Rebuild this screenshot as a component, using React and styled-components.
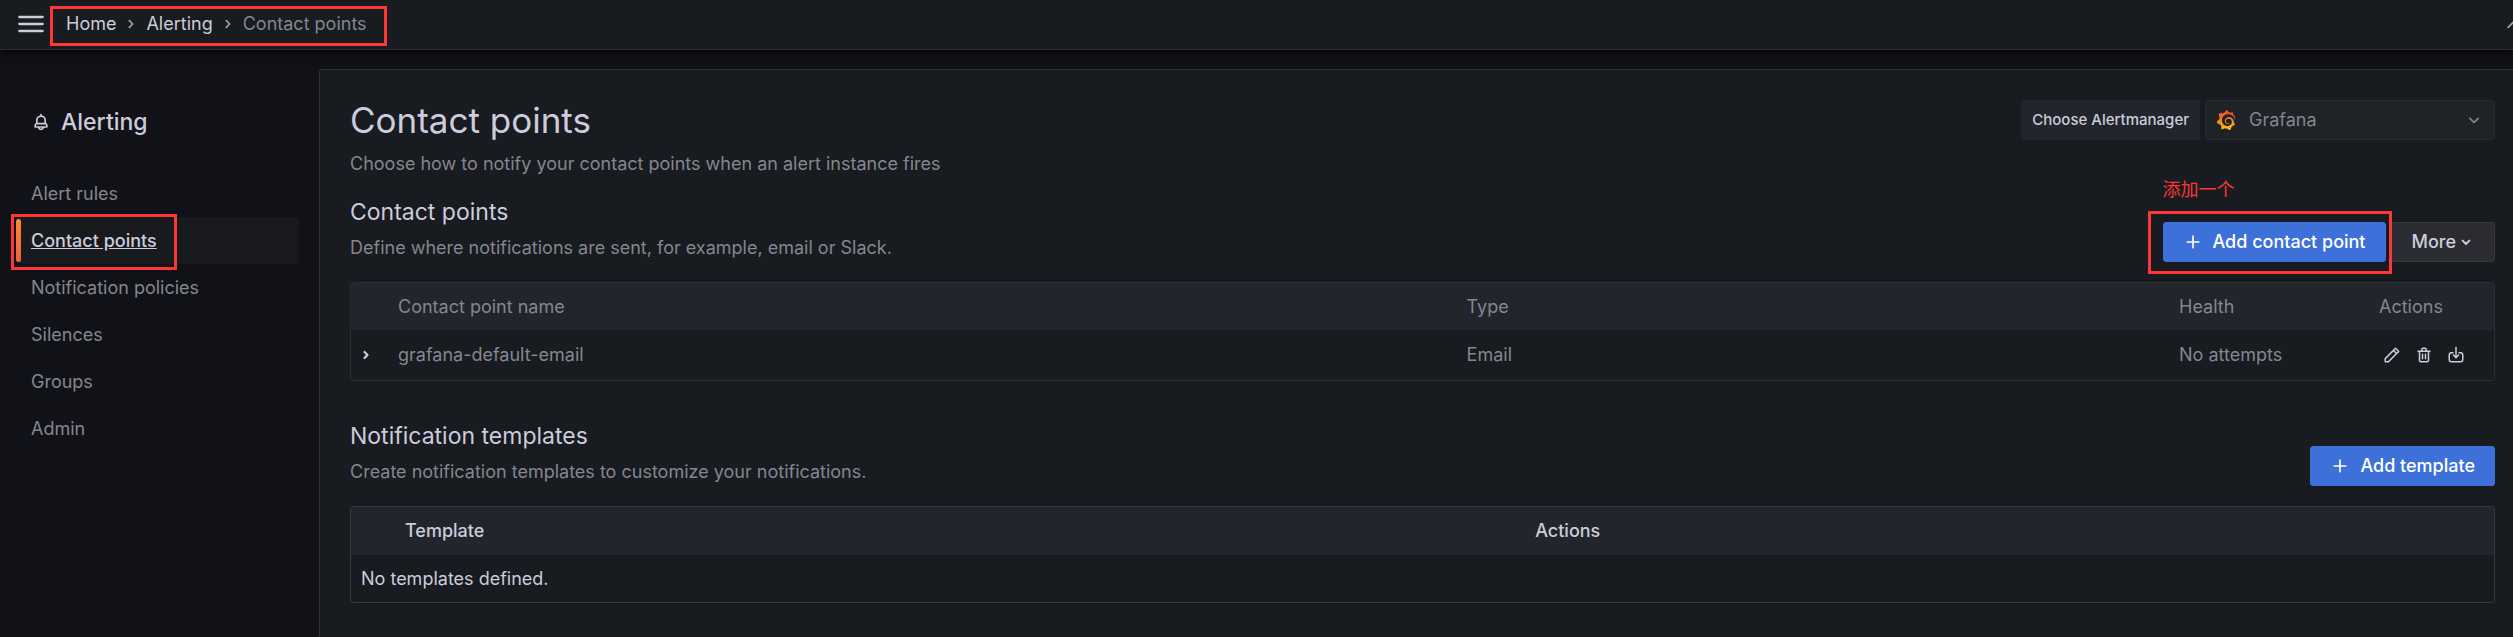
import styled, { createGlobalStyle, css } from "styled-components";
import { SiGrafana } from "react-icons/si";

const navItems = [
    { label: "Alert rules" },
    { label: "Contact points", active: true },
    { label: "Notification policies" },
    { label: "Silences" },
    { label: "Groups" },
    { label: "Admin" },
];

const contactPoints = [
    { name: "grafana-default-email", type: "Email", health: "No attempts" },
];

const icons = {
    pen: "M22,7.24a1,1,0,0,0-.29-.71L17.47,2.29A1,1,0,0,0,16.76,2a1,1,0,0,0-.71.29L13.22,5.12h0L2.29,16.05a1,1,0,0,0-.29.71V21a1,1,0,0,0,1,1H7.24A1,1,0,0,0,8,21.71L18.87,10.78h0L21.71,8a1.19,1.19,0,0,0,.22-.33,1,1,0,0,0,0-.24.7.7,0,0,0,0-.14ZM6.83,20H4V17.17l9.93-9.93,2.83,2.83ZM18.17,8.66,15.34,5.83l1.42-1.41,2.82,2.82Z",
    trash: "M10,18a1,1,0,0,0,1-1V11a1,1,0,0,0-2,0v6A1,1,0,0,0,10,18ZM20,6H16V5a3,3,0,0,0-3-3H11A3,3,0,0,0,8,5V6H4A1,1,0,0,0,4,8H5V19a3,3,0,0,0,3,3h8a3,3,0,0,0,3-3V8h1a1,1,0,0,0,0-2ZM10,5a1,1,0,0,1,1-1h2a1,1,0,0,1,1,1V6H10Zm7,14a1,1,0,0,1-1,1H8a1,1,0,0,1-1-1V8H17Zm-3-1a1,1,0,0,0,1-1V11a1,1,0,0,0-2,0v6A1,1,0,0,0,14,18Z",
    bell: "M18,13.18V10a6,6,0,0,0-5-5.91V3a1,1,0,0,0-2,0V4.09A6,6,0,0,0,6,10v3.18A3,3,0,0,0,4,16v2a1,1,0,0,0,1,1H8.14a4,4,0,0,0,7.72,0H19a1,1,0,0,0,1-1V16A3,3,0,0,0,18,13.18ZM8,10a4,4,0,0,1,8,0v3H8Zm4,10a2,2,0,0,1-1.72-1h3.44A2,2,0,0,1,12,20Zm6-3H6V16a1,1,0,0,1,1-1H17a1,1,0,0,1,1,1Z",
};

const strokes = {
    right: "M10 8l4 4-4 4",
    down: "M7 10l5 5 5-5",
    up: "M5 16l7-7 7 7",
    plus: "M12 5v14M5 12h14",
    download: "M12 2v13M8.5 12l3.5 3.5 3.5-3.5M8 9H6a3 3 0 0 0-3 3v6a3 3 0 0 0 3 3h12a3 3 0 0 0 3-3v-6a3 3 0 0 0-3-3h-2",
    menu: "M2 6h20M2 12h20M2 18h20",
};

function Icon({ name, size = 20, weight = 2 }) {
    return (
        <svg width={size} height={size} viewBox="0 0 24 24" aria-hidden="true">
            {icons[name] ? (
                <path d={icons[name]} fill="currentColor" />
            ) : (
                <path
                    d={strokes[name]}
                    fill="none"
                    stroke="currentColor"
                    strokeWidth={weight}
                    strokeLinecap="round"
                    strokeLinejoin="round"
                />
            )}
        </svg>
    );
}

function GrafanaLogo() {
    return (
        <>
            <svg width="0" height="0" aria-hidden="true">
                <linearGradient id="grafana" x1="0" y1="1" x2="0" y2="0">
                    <stop offset="0" stopColor="#fcc70b" />
                    <stop offset="0.8" stopColor="#f05a28" />
                </linearGradient>
            </svg>
            <SiGrafana size={20} fill="url(#grafana)" />
        </>
    );
}

export default function App() {
    return (
        <>
            <GlobalStyle />
            <TopBar>
                <MenuButton aria-label="Toggle menu"><Icon name="menu" size={28} /></MenuButton>
                <Breadcrumbs aria-label="Breadcrumbs">
                    <Crumb href="#home">Home</Crumb>
                    <Icon name="right" />
                    <Crumb href="#alerting">Alerting</Crumb>
                    <Icon name="right" />
                    <Current>Contact points</Current>
                    <Marker $inset="-5px -20px -10px -16px" />
                </Breadcrumbs>
                <CollapseButton aria-label="Collapse top bar"><Icon name="up" /></CollapseButton>
            </TopBar>
            <Layout>
                <Sidebar>
                    <SidebarTitle><Icon name="bell" /> Alerting</SidebarTitle>
                    <NavList>
                        {navItems.map((item) => (
                            <NavItem key={item.label}>
                                <NavLink href="#" $active={item.active}>{item.label}</NavLink>
                                {item.active && <Marker $inset="-3px 122px -6px -5px" />}
                            </NavItem>
                        ))}
                    </NavList>
                </Sidebar>
                <Main>
                    <Row>
                        <div>
                            <PageTitle>Contact points</PageTitle>
                            <Muted>Choose how to notify your contact points when an alert instance fires</Muted>
                        </div>
                        <Picker>
                            <PickerLabel htmlFor="alertmanager">Choose Alertmanager</PickerLabel>
                            <SelectBox>
                                <GrafanaLogo />
                                <Select id="alertmanager" disabled>
                                    <option>Grafana</option>
                                </Select>
                                <Icon name="down" />
                            </SelectBox>
                        </Picker>
                    </Row>

                    <Section>
                        <Row>
                            <div>
                                <SectionTitle>Contact points</SectionTitle>
                                <Muted>Define where notifications are sent, for example, email or Slack.</Muted>
                            </div>
                            <Actions>
                                <Marked>
                                    <Note>添加一个</Note>
                                    <Button $primary><Icon name="plus" /> Add contact point</Button>
                                    <Marker $inset="-11px -6px -12px -15px" />
                                </Marked>
                                <Button>More <Icon name="down" size={16} weight={3} /></Button>
                            </Actions>
                        </Row>
                        <Table $columns="37px 3fr 2fr 200px 125px" $head={47} $body={50}>
                            <thead>
                                <tr>
                                    <td></td>
                                    <Th>Contact point name</Th>
                                    <Th>Type</Th>
                                    <Th>Health</Th>
                                    <Th>Actions</Th>
                                </tr>
                            </thead>
                            <tbody>
                                {contactPoints.map((point) => (
                                    <tr key={point.name}>
                                        <ExpandCell>
                                            <IconButton aria-label="Expand row"><Icon name="right" weight={3} size={18} /></IconButton>
                                        </ExpandCell>
                                        <Td>{point.name}</Td>
                                        <Td>{point.type}</Td>
                                        <Td>{point.health}</Td>
                                        <IconCell>
                                            <IconButton aria-label="Edit"><Icon name="pen" size={18} /></IconButton>
                                            <IconButton aria-label="Delete"><Icon name="trash" size={18} /></IconButton>
                                            <IconButton aria-label="Export"><Icon name="download" size={18} /></IconButton>
                                        </IconCell>
                                    </tr>
                                ))}
                            </tbody>
                        </Table>
                    </Section>

                    <Section $spaced>
                        <Row>
                            <div>
                                <SectionTitle>Notification templates</SectionTitle>
                                <Muted>Create notification templates to customize your notifications.</Muted>
                            </div>
                            <Actions>
                                <Button $primary><Icon name="plus" /> Add template</Button>
                            </Actions>
                        </Row>
                        <Table $columns="44px 7fr 6fr" $head={48} $body={47} $strong>
                            <thead>
                                <tr>
                                    <td></td>
                                    <Th>Template</Th>
                                    <Th>Actions</Th>
                                </tr>
                            </thead>
                            <tbody>
                                <tr>
                                    <EmptyCell colSpan={3}>No templates defined.</EmptyCell>
                                </tr>
                            </tbody>
                        </Table>
                    </Section>
                </Main>
            </Layout>
        </>
    );
}

const GlobalStyle = createGlobalStyle`
    * {
        box-sizing: border-box;
    }
    html, body, #root {
        height: 100%;
    }
    body {
        margin: 0;
        background: #111217;
        color: #ccccdc;
        font: 400 18px/28px Inter, "Noto Sans CJK SC", sans-serif;
    }
    #root {
        display: flex;
        flex-direction: column;
    }
    button, select {
        font: inherit;
        color: inherit;
    }
    h1, h2, p, ul {
        margin: 0;
        padding: 0;
    }
    svg {
        flex: none;
        display: block;
    }
`;

// red frame drawn around its parent
const Marker = styled.span`
    position: absolute;
    inset: ${({ $inset }) => $inset};
    border: 3px solid #ff3636;
    pointer-events: none;
    z-index: 1;
`;

const TopBar = styled.header`
    display: flex;
    align-items: center;
    height: 50px;
    padding: 0 0 2px 17px;
    overflow: hidden;
    flex: none;
    background: #181b1f;
    border-bottom: 1px solid #2d2e34;
    box-shadow: 0 1px 10px #000;
    position: relative;
`;

const MenuButton = styled.button`
    padding: 0;
    border: 0;
    background: none;
`;

const Breadcrumbs = styled.nav`
    position: relative;
    display: flex;
    align-items: center;
    gap: 5px;
    height: 25px;
    margin-left: 21px;
    color: #a0a1ac;
`;

const Crumb = styled.a`
    color: #ccccdc;
    text-decoration: none;
`;

const Current = styled.span`
    color: #85868f;
`;

const CollapseButton = styled(MenuButton)`
    margin-left: auto;
    margin-right: -11px;
    color: #a0a1ac;
`;

const Layout = styled.div`
    display: flex;
    flex: 1;
`;

const Sidebar = styled.aside`
    width: 319px;
    flex: none;
    padding: 57px 20px 0 16px;
`;

const SidebarTitle = styled.h2`
    display: flex;
    align-items: center;
    gap: 10px;
    padding-left: 15px;
    font-size: 23px;
    font-weight: 500;
    line-height: 30px;
`;

const NavList = styled.ul`
    margin-top: 33px;
    list-style: none;
`;

const NavItem = styled.li`
    position: relative;
`;

const NavLink = styled.a`
    display: flex;
    align-items: center;
    height: 47px;
    padding-left: 15px;
    border-radius: 3px;
    color: #85868f;
    text-decoration: none;
    ${({ $active }) => $active && css`
        padding-left: 0;
        color: #ccccdc;
        font-weight: 500;
        text-decoration: underline;
        background: #181a1d;
        &::before {
            content: "";
            width: 5px;
            height: 43px;
            margin-right: 10px;
            border-radius: 3px;
            background: linear-gradient(#ff8833, #f55f3e);
        }
    `}
`;

const Main = styled.main`
    flex: 1;
    min-width: 0;
    margin-top: 19px;
    padding: 29px 18px 30px 30px;
    background: #181b1f;
    border: solid #2d2e34;
    border-width: 1px 0 0 1px;
    border-radius: 3px 0 0 0;
`;

const Row = styled.div`
    display: flex;
    justify-content: space-between;
    align-items: flex-start;
`;

const PageTitle = styled.h1`
    font-size: 35px;
    font-weight: 400;
    line-height: 42px;
    margin-bottom: 9px;
`;

const Muted = styled.p`
    color: #85868f;
`;

const Picker = styled.div`
    display: flex;
    gap: 5px;
    padding-top: 1px;
    color: #85868f;
`;

const PickerLabel = styled.label`
    height: 40px;
    padding: 0 11px;
    border-radius: 3px;
    background: #22252b;
    color: #ccccdc;
    font-size: 15px;
    font-weight: 500;
    line-height: 40px;
`;

const SelectBox = styled.div`
    display: flex;
    align-items: center;
    width: 290px;
    height: 40px;
    padding: 0 10px;
    border: 1px solid #25282d;
    border-radius: 3px;
    background: #1f2226;
`;

const Select = styled.select`
    flex: 1;
    min-width: 0;
    margin-left: 13px;
    padding: 0;
    border: 0;
    background: none;
    appearance: none;
    opacity: 1;
`;

const Section = styled.section`
    margin-top: ${({ $spaced }) => ($spaced ? 40 : 19)}px;
`;

const SectionTitle = styled.h2`
    font-size: 23px;
    font-weight: 400;
    line-height: 30px;
    margin-bottom: 7px;
`;

const Actions = styled.div`
    display: flex;
    gap: 5px;
    margin-top: 25px;
`;

const Marked = styled.div`
    position: relative;
`;

const Note = styled.span`
    position: absolute;
    bottom: 100%;
    left: 0;
    margin-bottom: 18px;
    color: #ff3636;
    white-space: nowrap;
`;

const Button = styled.button`
    display: flex;
    align-items: center;
    gap: 2px;
    height: 40px;
    padding: 0 20px;
    border: 1px solid #37383e;
    border-radius: 3px;
    background: #2b2c31;
    font-weight: 500;
    ${({ $primary }) => $primary && css`
        gap: 10px;
        padding: 0 19px;
        border-color: #3d71d9;
        background: #3d71d9;
        color: #fff;
    `}
`;

const Table = styled.table`
    display: block;
    margin-top: 20px;
    border: 1px solid ${({ $strong }) => ($strong ? "#37393e" : "#2d2e34")};
    border-radius: 3px;
    color: ${({ $strong }) => ($strong ? "#ccccdc" : "#85868f")};
    thead, tbody {
        display: block;
    }
    thead {
        background: #22252b;
        font-weight: ${({ $strong }) => ($strong ? 500 : 400)};
    }
    tr {
        display: grid;
        grid-template-columns: ${({ $columns }) => $columns};
        align-items: center;
        min-height: ${({ $body }) => $body}px;
    }
    thead tr {
        min-height: ${({ $head }) => $head}px;
    }
`;

const Th = styled.th`
    padding: 0 10px;
    font-weight: inherit;
    text-align: left;
`;

const Td = styled.td`
    padding: 0 10px;
`;

const ExpandCell = styled.td`
    padding: 0 6px;
    color: #ccccdc;
`;

const IconCell = styled.td`
    display: flex;
    gap: 14px;
    padding: 0 14px;
    color: #ccccdc;
`;

const IconButton = styled(MenuButton)`
    display: block;
`;

const EmptyCell = styled.td`
    grid-column: 1 / -1;
    padding: 0 10px;
`;
